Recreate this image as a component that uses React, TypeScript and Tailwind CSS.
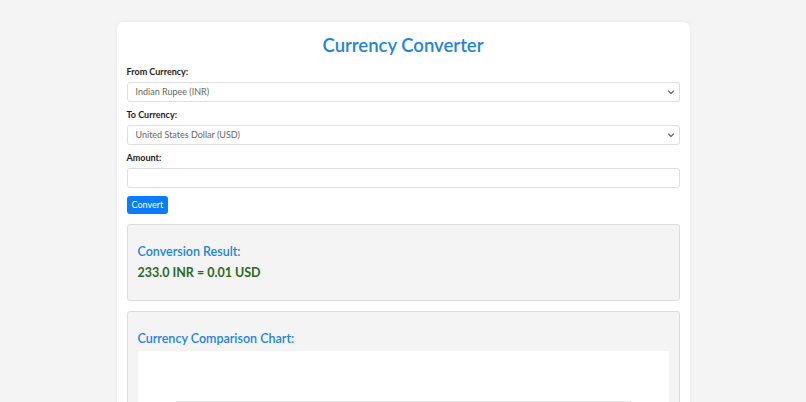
import * as React from "react";

function Chevron() {
  return (
    <svg
      className="pointer-events-none absolute right-[5px] top-1/2 h-[8px] w-[8px] -translate-y-1/2 text-[#666]"
      viewBox="0 0 16 16"
      fill="none"
      stroke="currentColor"
      strokeWidth="2.2"
      strokeLinecap="round"
      strokeLinejoin="round"
    >
      <path d="M3 6l5 5 5-5" />
    </svg>
  );
}

function SelectField({ label, value }: { label: string; value: string }) {
  return (
    <div className="mb-[7px]">
      <label className="mb-[4px] block h-[12px] text-[9px] font-bold leading-[12px] text-[#222]">{label}</label>
      <div className="relative">
        <select
          defaultValue={value}
          className="block h-[20px] w-full appearance-none rounded-[3px] border border-[#dedede] bg-white pl-[8px] text-[9px] leading-[18px] text-[#666] outline-none"
        >
          <option>{value}</option>
        </select>
        <Chevron />
      </div>
    </div>
  );
}

export default function App() {
  return (
    <div className="min-h-[402px] bg-[#f4f4f4] pt-[22px] font-['Lato','Open_Sans',sans-serif]">
      <div className="mx-auto h-[400px] w-[573px] rounded-t-[6px] bg-white px-[10px] pt-[10px] shadow-[0_0_4px_rgba(0,0,0,0.06)]">
        <h1 className="mb-[8px] h-[26px] text-center text-[18.5px] font-semibold leading-[26px] text-[#2283e6]">
          Currency Converter
        </h1>

        <SelectField label="From Currency:" value="Indian Rupee (INR)" />
        <SelectField label="To Currency:" value="United States Dollar (USD)" />

        <div className="mb-[8px]">
          <label className="mb-[4px] block h-[12px] text-[9px] font-bold leading-[12px] text-[#222]">Amount:</label>
          <input
            type="number"
            className="block h-[20px] w-full rounded-[3px] border border-[#dedede] bg-white px-[8px] text-[9px] outline-none"
          />
        </div>

        <button className="block h-[18px] rounded-[3px] bg-[#0a7cff] px-[5px] text-[9px] leading-[18px] text-white">
          Convert
        </button>

        <div className="mt-[10px] rounded-[3px] border border-[#dcdcdc] bg-[#f4f4f4] px-[10px] pb-[19px] pt-[19px]">
          <h3 className="h-[16px] text-[12.5px] font-semibold leading-[16px] text-[#2283e6]">Conversion Result:</h3>
          <p className="mt-[5px] h-[16px] text-[12.5px] font-bold leading-[16px] text-[#276b1f]">233.0 INR = 0.01 USD</p>
        </div>

        <div className="mt-[10px] rounded-[3px] border border-[#dcdcdc] bg-[#f4f4f4] px-[10px] pt-[19px]">
          <h3 className="mb-[4px] h-[16px] text-[12.5px] font-semibold leading-[16px] text-[#2283e6]">
            Currency Comparison Chart:
          </h3>
          <div className="h-[80px] bg-white pt-[50px]">
            <div className="mx-[38px] border-t border-[#e6e6e6]" />
          </div>
        </div>
      </div>
    </div>
  );
}
